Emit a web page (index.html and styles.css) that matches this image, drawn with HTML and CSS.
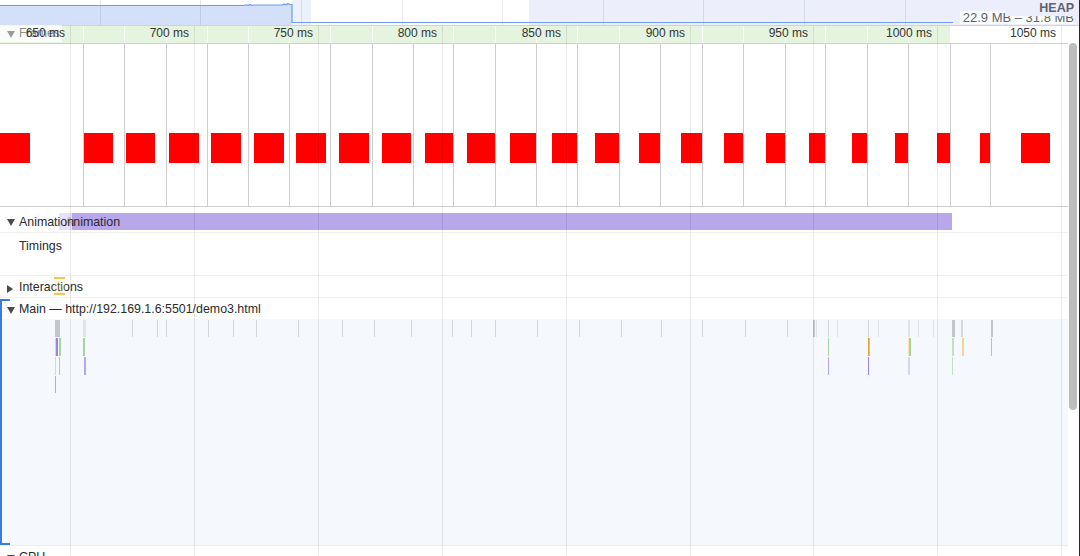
FILE: index.html
```html
<!DOCTYPE html>
<html>
<head>
<meta charset="utf-8">
<link rel="stylesheet" href="styles.css">
</head>
<body>
<div class="app">
  <div class="overview">
    <svg class="ov-chart" width="1079" height="25" viewBox="0 0 1079 25">
      <rect x="529" y="0" width="551" height="25" fill="#eceffb"/>
      <rect x="292" y="0" width="19" height="25" fill="#edf1fc"/>
      <polygon points="0,5.5 244,5.5 246,4.8 248,5.3 250,4.4 252,5.3 254,5 282,5 284,4.2 286,4.6 288,3.6 290,4.5 292,4.5 292,25 0,25" fill="#d4dff9"/>
      <g stroke="rgba(60,70,100,0.12)" stroke-width="1">
        <line x1="100.5" y1="0" x2="100.5" y2="25"/>
        <line x1="200.5" y1="0" x2="200.5" y2="25"/>
        <line x1="301.5" y1="0" x2="301.5" y2="25"/>
        <line x1="402.5" y1="0" x2="402.5" y2="25"/>
        <line x1="502.5" y1="0" x2="502.5" y2="25"/>
        <line x1="603.5" y1="0" x2="603.5" y2="25"/>
        <line x1="703.5" y1="0" x2="703.5" y2="25"/>
        <line x1="804.5" y1="0" x2="804.5" y2="25"/>
        <line x1="905.5" y1="0" x2="905.5" y2="25"/>
        <line x1="1005.5" y1="0" x2="1005.5" y2="25"/>
      </g>
      <polyline points="0,5.5 244,5.5 246,4.8 248,5.3 250,4.4 252,5.3 254,5 282,5 284,4.2 286,4.6 288,3.6 290,4.5 292,4.5 292,22.5 953,22.5" fill="none" stroke="#6f9cf1" stroke-width="1.2"/>
    </svg>
    <div class="heap-range">22.9 MB – 31.8 MB</div>
    <div class="heap-label">HEAP</div>
  </div>

  <div class="ruler">
    <div class="rsep" style="left:83px"></div>
    <div class="rsep" style="left:124px"></div>
    <div class="rsep" style="left:166px"></div>
    <div class="rsep" style="left:207px"></div>
    <div class="rsep" style="left:248px"></div>
    <div class="rsep" style="left:289px"></div>
    <div class="rsep" style="left:330px"></div>
    <div class="rsep" style="left:372px"></div>
    <div class="rsep" style="left:413px"></div>
    <div class="rsep" style="left:453px"></div>
    <div class="rsep" style="left:495px"></div>
    <div class="rsep" style="left:536px"></div>
    <div class="rsep" style="left:577px"></div>
    <div class="rsep" style="left:619px"></div>
    <div class="rsep" style="left:660px"></div>
    <div class="rsep" style="left:702px"></div>
    <div class="rsep" style="left:743px"></div>
    <div class="rsep" style="left:785px"></div>
    <div class="rsep" style="left:825px"></div>
    <div class="rsep" style="left:867px"></div>
    <div class="rsep" style="left:908px"></div>
    <div class="frames-label"><span class="tri-down light"></span>Frames</div>
    <div class="tick" style="left:5px">650 ms</div>
    <div class="tick" style="left:129px">700 ms</div>
    <div class="tick" style="left:253px">750 ms</div>
    <div class="tick" style="left:377px">800 ms</div>
    <div class="tick" style="left:501px">850 ms</div>
    <div class="tick" style="left:625px">900 ms</div>
    <div class="tick" style="left:748px">950 ms</div>
    <div class="tick" style="left:872px">1000 ms</div>
    <div class="tick" style="left:996px">1050 ms</div>
  </div>

  <div class="body-row">
    <div class="tracks">
      <div class="frames">
        <div class="fline" style="left:83px"></div>
        <div class="fline" style="left:124px"></div>
        <div class="fline" style="left:166px"></div>
        <div class="fline" style="left:207px"></div>
        <div class="fline" style="left:248px"></div>
        <div class="fline" style="left:289px"></div>
        <div class="fline" style="left:330px"></div>
        <div class="fline" style="left:372px"></div>
        <div class="fline" style="left:413px"></div>
        <div class="fline" style="left:453px"></div>
        <div class="fline" style="left:495px"></div>
        <div class="fline" style="left:536px"></div>
        <div class="fline" style="left:577px"></div>
        <div class="fline" style="left:619px"></div>
        <div class="fline" style="left:660px"></div>
        <div class="fline" style="left:702px"></div>
        <div class="fline" style="left:743px"></div>
        <div class="fline" style="left:785px"></div>
        <div class="fline" style="left:825px"></div>
        <div class="fline" style="left:867px"></div>
        <div class="fline" style="left:908px"></div>
        <div class="fline" style="left:950px"></div>
        <div class="fline" style="left:990px"></div>

        <div class="shot" style="left:0px;width:30px"></div>
        <div class="shot" style="left:84px;width:29px"></div>
        <div class="shot" style="left:126px;width:29px"></div>
        <div class="shot" style="left:169px;width:30px"></div>
        <div class="shot" style="left:211px;width:30px"></div>
        <div class="shot" style="left:254px;width:30px"></div>
        <div class="shot" style="left:296px;width:30px"></div>
        <div class="shot" style="left:339px;width:30px"></div>
        <div class="shot" style="left:382px;width:29px"></div>
        <div class="shot" style="left:425px;width:28px"></div>
        <div class="shot" style="left:467px;width:28px"></div>
        <div class="shot" style="left:510px;width:26px"></div>
        <div class="shot" style="left:552px;width:25px"></div>
        <div class="shot" style="left:595px;width:24px"></div>
        <div class="shot" style="left:639px;width:21px"></div>
        <div class="shot" style="left:681px;width:21px"></div>
        <div class="shot" style="left:724px;width:19px"></div>
        <div class="shot" style="left:766px;width:19px"></div>
        <div class="shot" style="left:809px;width:16px"></div>
        <div class="shot" style="left:852px;width:15px"></div>
        <div class="shot" style="left:895px;width:13px"></div>
        <div class="shot" style="left:937px;width:13px"></div>
        <div class="shot" style="left:980px;width:10px"></div>
        <div class="shot" style="left:1021px;width:29px"></div>
      </div>

      <div class="row row-anim">
        <div class="anim-bar">Animation</div>
        <div class="label label-anim"><span class="tri-down"></span>Animation</div>
      </div>

      <div class="row row-timings">
        <div class="label label-plain">Timings</div>
      </div>

      <div class="row row-inter">
        <div class="label label-row"><span class="tri-right"></span>Interactions</div>
        <div class="inter-mark"></div>
      </div>

      <div class="main-group">
        <div class="bracket"></div>
        <div class="row row-head">
          <div class="label label-row"><span class="tri-down"></span>Main — http://192.169.1.6:5501/demo3.html</div>
        </div>
        <div class="main-content">
          <div class="fb r1 gd" style="left:55px;width:5px"></div>
          <div class="fb r1 gl" style="left:83px;width:3px"></div>
          <div class="fb r1 g" style="left:132px"></div>
          <div class="fb r1 g" style="left:157px"></div>
          <div class="fb r1 g" style="left:166px"></div>
          <div class="fb r1 g" style="left:208px"></div>
          <div class="fb r1 g" style="left:233px"></div>
          <div class="fb r1 g" style="left:256px"></div>
          <div class="fb r1 g" style="left:298px"></div>
          <div class="fb r1 g" style="left:342px"></div>
          <div class="fb r1 g" style="left:374px"></div>
          <div class="fb r1 g" style="left:411px"></div>
          <div class="fb r1 g" style="left:452px"></div>
          <div class="fb r1 g" style="left:471px"></div>
          <div class="fb r1 g" style="left:495px"></div>
          <div class="fb r1 g" style="left:537px"></div>
          <div class="fb r1 g" style="left:579px"></div>
          <div class="fb r1 g" style="left:621px"></div>
          <div class="fb r1 g" style="left:661px"></div>
          <div class="fb r1 g" style="left:702px"></div>
          <div class="fb r1 g" style="left:745px"></div>
          <div class="fb r1 g" style="left:787px"></div>
          <div class="fb r1 gd" style="left:813px;width:2px"></div>
          <div class="fb r1 gl" style="left:816px"></div>
          <div class="fb r1 g" style="left:828px"></div>
          <div class="fb r1 gl" style="left:837px"></div>
          <div class="fb r1 g" style="left:868px"></div>
          <div class="fb r1 gl" style="left:878px"></div>
          <div class="fb r1 gl" style="left:908px;width:2px"></div>
          <div class="fb r1 gl" style="left:918px"></div>
          <div class="fb r1 gl" style="left:933px"></div>
          <div class="fb r1 gd" style="left:952px;width:3px"></div>
          <div class="fb r1 g" style="left:961px;width:2px"></div>
          <div class="fb r1 gd" style="left:991px;width:2px"></div>

          <div class="fb r2 ye" style="left:55px"></div>
          <div class="fb r2 pud" style="left:56px;width:2px"></div>
          <div class="fb r2 gr" style="left:59px;width:2px"></div>
          <div class="fb r2 gr" style="left:83px;width:2px"></div>
          <div class="fb r2 gr" style="left:828px"></div>
          <div class="fb r2 or" style="left:868px"></div>
          <div class="fb r2 gr" style="left:869px"></div>
          <div class="fb r2 yel" style="left:908px"></div>
          <div class="fb r2 gr" style="left:909px;width:2px"></div>
          <div class="fb r2 grl" style="left:952px;width:2px"></div>
          <div class="fb r2 ye" style="left:962px;width:2px"></div>
          <div class="fb r2 gr" style="left:991px"></div>

          <div class="fb r3 ye" style="left:55px"></div>
          <div class="fb r3 gr" style="left:59px"></div>
          <div class="fb r3 pu" style="left:84px;width:2px"></div>
          <div class="fb r3 pu" style="left:828px"></div>
          <div class="fb r3 pud" style="left:868px"></div>
          <div class="fb r3 pul" style="left:908px;width:2px"></div>
          <div class="fb r3 grl" style="left:952px"></div>

          <div class="fb r4 pu" style="left:55px"></div>
        </div>
      </div>

      <div class="row row-cpu">
        <div class="label label-row"><span class="tri-down"></span>CPU</div>
      </div>
    </div>
    <div class="gutter"><div class="thumb"></div></div>
  </div>

  <div class="grid">
    <div class="gline" style="left:70px"></div>
    <div class="gline" style="left:194px"></div>
    <div class="gline" style="left:318px"></div>
    <div class="gline" style="left:442px"></div>
    <div class="gline" style="left:566px"></div>
    <div class="gline" style="left:690px"></div>
    <div class="gline" style="left:813px"></div>
    <div class="gline" style="left:937px"></div>
    <div class="gline" style="left:1061px"></div>
  </div>
</div>
</body>
</html>
```

FILE: styles.css
```css
html, body {
  margin: 0;
  padding: 0;
  background: #fff;
}

.app {
  position: relative;
  width: 1079px;
  height: 556px;
  overflow: hidden;
  border-right: 1px solid #2c2530;
  background: #fff;
  font-family: "Liberation Sans", Arial, sans-serif;
  font-size: 12px;
  color: #303030;
}

/* ---------- heap overview ---------- */
.overview {
  position: relative;
  height: 25px;
  border-bottom: 1px solid #cfd2d8;
}
.ov-chart {
  display: block;
}
.heap-range {
  position: absolute;
  top: 11px;
  right: 5px;
  padding-left: 3px;
  font-size: 13px;
  line-height: 13px;
  color: #5f6368;
  background: rgba(255, 255, 255, 0.85);
}
.heap-label {
  position: absolute;
  top: 0;
  right: 0;
  width: 74px;
  height: 16px;
  box-sizing: border-box;
  padding-right: 5px;
  text-align: right;
  font-weight: bold;
  font-size: 12.5px;
  line-height: 16px;
  color: #5b6270;
  background: #eceffb;
}

/* ---------- ruler ---------- */
.ruler {
  position: relative;
  height: 17px;
  background: linear-gradient(to right, #e5f4de 0, #e5f4de 950px, #fff 950px);
}
.rsep {
  position: absolute;
  top: 0;
  bottom: 0;
  width: 1px;
  background: rgba(255, 255, 255, 0.85);
}
.tick {
  position: absolute;
  top: -1px;
  width: 60px;
  text-align: right;
  line-height: 16px;
  color: #333;
  white-space: nowrap;
}
.frames-label {
  position: absolute;
  left: 0;
  top: -1px;
  width: 62px;
  height: 17px;
  box-sizing: border-box;
  padding-left: 19px;
  line-height: 16px;
  color: #8c8c8c;
  background: rgba(255, 255, 255, 0.8);
  overflow: hidden;
  white-space: nowrap;
}

/* ---------- triangles ---------- */
.tri-down, .tri-right {
  position: absolute;
  left: 6.5px;
  width: 0;
  height: 0;
}
.tri-down {
  top: calc(50% - 2.5px);
  border-left: 4px solid transparent;
  border-right: 4px solid transparent;
  border-top: 7px solid #4a4a4a;
}
.tri-down.light {
  top: calc(50% - 3px);
  border-top-color: #9a9a9a;
}
.tri-right {
  left: 7px;
  top: calc(50% - 3px);
  border-top: 4px solid transparent;
  border-bottom: 4px solid transparent;
  border-left: 6.5px solid #4a4a4a;
}

/* ---------- body ---------- */
.body-row {
  display: flex;
}
.tracks {
  width: 1068px;
  flex: none;
}
.gutter {
  position: relative;
  flex: 1;
}
.thumb {
  position: absolute;
  left: 1px;
  top: 0;
  width: 8px;
  height: 367px;
  border-radius: 4px;
  background: #bdbdbd;
}

/* frames track */
.frames {
  position: relative;
  height: 162px;
  border-top: 1px solid #d0d0d0;
  border-bottom: 1px solid #cdcdcd;
  background: #fff;
  overflow: hidden;
}
.fline {
  position: absolute;
  top: 0;
  bottom: 0;
  width: 1px;
  background: #cdcdcd;
  z-index: 2;
}
.shot {
  position: absolute;
  top: 89px;
  height: 30px;
  background: #ff0000;
}

/* generic rows */
.row {
  position: relative;
}
.label {
  position: absolute;
  left: 0;
  white-space: nowrap;
  color: #2a2a2a;
  font-size: 12.4px;
}
.label-row {
  top: 1px;
  height: 21px;
  line-height: 21px;
  padding-left: 19px;
}
.label-plain {
  top: 5px;
  line-height: 17px;
  padding-left: 19px;
}

.row-anim {
  height: 25px;
  border-bottom: 1px solid #f1f1f1;
}
.anim-bar {
  position: absolute;
  left: 59px;
  top: 6px;
  width: 893px;
  height: 17px;
  box-sizing: border-box;
  padding-left: 6px;
  padding-top: 1px;
  line-height: 17px;
  font-size: 12.4px;
  background: #b9a7ec;
  color: #2a2a2a;
  white-space: nowrap;
  overflow: hidden;
}
.label-anim {
  top: 6px;
  height: 17px;
  line-height: 19px;
  padding-left: 19px;
  width: 72px;
  box-sizing: border-box;
  background: rgba(255, 255, 255, 0.65);
}

.row-timings {
  height: 42px;
  border-bottom: 1px solid #f1f1f1;
}

.row-inter {
  height: 21px;
  border-bottom: 1px solid #f1f1f1;
}
.inter-mark {
  position: absolute;
  left: 54px;
  top: 1px;
  width: 11px;
  height: 18px;
  box-sizing: border-box;
  border-top: 2px solid #f1c75c;
  border-bottom: 2px solid #f1c75c;
  background: rgba(255, 226, 150, 0.25);
}

.main-group {
  position: relative;
}
.bracket {
  position: absolute;
  left: 0;
  top: 1px;
  width: 10px;
  height: 246px;
  box-sizing: border-box;
  border-left: 2px solid #3a7ce0;
  border-top: 2px solid #3a7ce0;
  border-bottom: 2px solid #3a7ce0;
  z-index: 3;
}
.row-head {
  height: 21px;
}
.main-content {
  position: relative;
  height: 226px;
  background: #f5f8fd;
}
.row-cpu {
  height: 21px;
  border-top: 1px solid #eceef1;
}

/* flame chart slivers */
.fb {
  position: absolute;
  width: 1px;
}
.r1 { top: 1px; height: 17px; }
.r2 { top: 19px; height: 18px; }
.r3 { top: 38px; height: 18px; }
.r4 { top: 57px; height: 17px; }
.g   { background: #d4d6d9; }
.gl  { background: #e0e2e5; }
.gd  { background: #c4c6c9; }
.gr  { background: #a6d4a0; }
.grl { background: #c4e0c2; }
.pu  { background: #b9a6f3; }
.pud { background: #9c80ec; }
.pul { background: #dcd4f8; }
.ye  { background: #f3d58e; }
.yel { background: #f7e3aa; }
.or  { background: #e4a232; }

/* grid overlay */
.grid {
  position: absolute;
  left: 0;
  top: 26px;
  right: 0;
  bottom: 0;
  pointer-events: none;
  z-index: 5;
}
.gline {
  position: absolute;
  top: 0;
  bottom: 0;
  width: 1px;
  background: rgba(0, 0, 0, 0.085);
}
```
